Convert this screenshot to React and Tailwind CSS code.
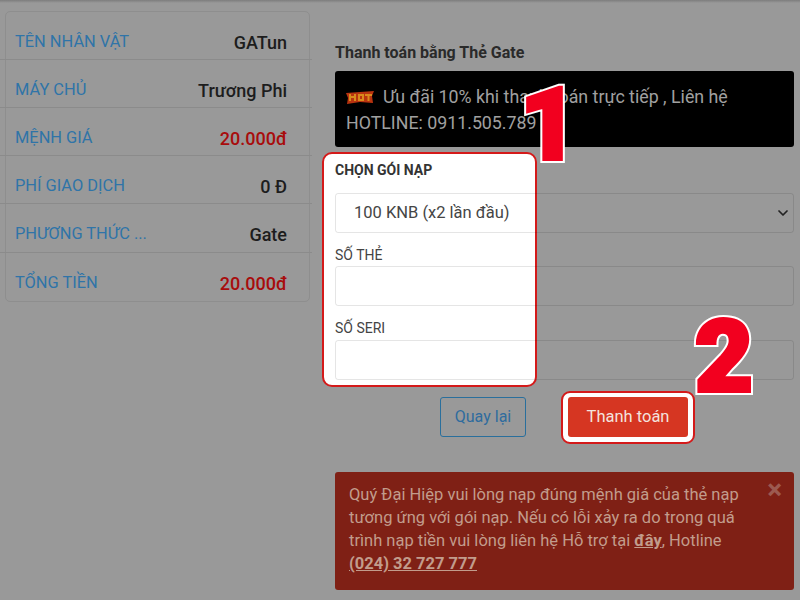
import React from "react";
import { ChevronDown } from "lucide-react";

const rows = [
  ["TÊN NHÂN VẬT", "GATun", "text-[#1d1d1d]", "h-[48px]"],
  ["MÁY CHỦ", "Trương Phi", "text-[#1d1d1d]", "h-[48px]"],
  ["MỆNH GIÁ", "20.000đ", "text-[#a80c0c]", "h-[48px]"],
  ["PHÍ GIAO DỊCH", "0 Đ", "text-[#1d1d1d]", "h-[48px]"],
  ["PHƯƠNG THỨC ...", "Gate", "text-[#1d1d1d]", "h-[49px]"],
  ["TỔNG TIỀN", "20.000đ", "text-[#a80c0c]", "h-[48px]"],
];

function Badge({ children, className }) {
  return (
    <div className={"absolute font-['Roboto',sans-serif] font-black leading-none select-none " + className}>
      <span className="absolute left-0 top-0 text-white [-webkit-text-stroke:8px_white]">{children}</span>
      <span className="relative text-[#f2001f] [-webkit-text-stroke:4px_#f2001f]">{children}</span>
    </div>
  );
}

export default function App() {
  return (
    <div className="relative w-[800px] h-[600px] overflow-hidden bg-[#999999] font-['Roboto',sans-serif]">
      <div className="h-[3px] bg-gradient-to-b from-[#7d7d7d] to-[#999999]" />
      <div className="flex pt-[8px] pl-[5px]">
        <div className="w-[305px] h-[291px] rounded-[5px] border border-[#8e8e8e]">
          {rows.map(([label, value, color, h], i) => (
            <div
              key={label}
              className={
                "flex items-center justify-between -ml-[6px] -mr-[3px] pl-[15px] pr-[25px] pt-[13px] text-[16.4px] " +
                h +
                (i < rows.length - 1 ? " border-b border-[#8b8b8b]" : "")
              }
            >
              <span className="text-[#2f74a8]">{label}</span>
              <span className={"font-medium text-[18px] " + color}>{value}</span>
            </div>
          ))}
        </div>

        <div className="ml-[25px] w-[459px] pt-[30px]">
          <div className="text-[16px] font-bold leading-[24px] text-[#2a2a2a] mb-[6px]">Thanh toán bằng Thẻ Gate</div>
          <div className="h-[76px] rounded-[3px] bg-black px-[11px] pt-[13px] text-[17.8px] leading-[25.5px] text-[#a0a0a0]">
            <svg className="inline-block align-[-1px] mr-[9px]" width="28" height="13" viewBox="0 0 28 13">
              <path d="M0 2 L28 0 L26 5 L27 12 L14 11 L1 13 L2 7 Z" fill="#b9330f" />
              <path d="M3 3h2v2h3V3h2v7H8V7H5v3H3zM12 3h6v7h-6zM14 5v3h2V5zM19 3h7v2h-2.5v5h-2V5H19z" fill="#d98a1c" />
            </svg>
            Ưu đãi 10% khi thanh toán trực tiếp , Liên hệ HOTLINE: 0911.505.789
          </div>

          <div className="relative mt-[5px]">
            <div className="absolute left-[-13px] top-0 w-[215px] h-[235px] rounded-[10px] border-2 border-[#d41a1a] bg-white" />
            <div className="relative pt-[10px]">
              <div className="text-[14px] font-bold leading-[16px] text-[#333333]">CHỌN GÓI NẠP</div>
              <div className="mt-[15px] h-[40px] flex items-center justify-between rounded-[3px] border border-black/10 pl-[18px] pr-[2px] text-[16.5px] text-[#454545]">
                <span>100 KNB (x2 lần đầu)</span>
                <ChevronDown size={16} strokeWidth={2.6} className="text-[#222222]" />
              </div>
              <div className="mt-[12px] text-[14px] leading-[20px] text-[#444444]">SỐ THẺ</div>
              <div className="mt-[1px] h-[40px] rounded-[3px] border border-black/10" />
              <div className="mt-[12px] text-[14px] leading-[20px] text-[#444444]">SỐ SERI</div>
              <div className="mt-[2px] h-[40px] rounded-[3px] border border-black/10" />
            </div>
          </div>

          <div className="mt-[17px] flex pl-[105px] items-center">
            <div className="w-[86px] h-[40px] flex items-center justify-center rounded-[3px] border border-[#2a6f9c] text-[16px] text-[#2f6c9e]">Quay lại</div>
            <div className="relative ml-[42px] w-[120px] h-[40px] flex items-center justify-center text-[16.5px] text-[#f3e3de]">
              <div className="absolute -inset-x-[7px] -top-[6px] -bottom-[7px] rounded-[9px] border-2 border-[#d41a1a] bg-white" />
              <div className="absolute inset-0 rounded-[3px] bg-[#d63622]" />
              <span className="relative">Thanh toán</span>
            </div>
          </div>

          <div className="relative mt-[35px] h-[118px] rounded-[3px] bg-[#7f2015] pl-[14px] pr-[30px] pt-[11px] text-[16.5px] leading-[23px] text-[#c29c8c]">
            Quý Đại Hiệp vui lòng nạp đúng mệnh giá của thẻ nạp tương ứng với gói nạp. Nếu có lỗi xảy ra do trong quá trình nạp tiền vui lòng liên hệ Hỗ trợ tại <b className="underline">đây</b>, Hotline <b className="underline">(024) 32 727 777</b>
            <span className="absolute right-[12px] top-[4px] text-[28px] font-bold leading-[28px] text-[#9c5a50]">×</span>
          </div>
        </div>
      </div>

      <Badge className="left-[520px] top-[75px] text-[100px]">1</Badge>
      <Badge className="left-[695px] top-[307px] text-[100px]">2</Badge>
    </div>
  );
}
